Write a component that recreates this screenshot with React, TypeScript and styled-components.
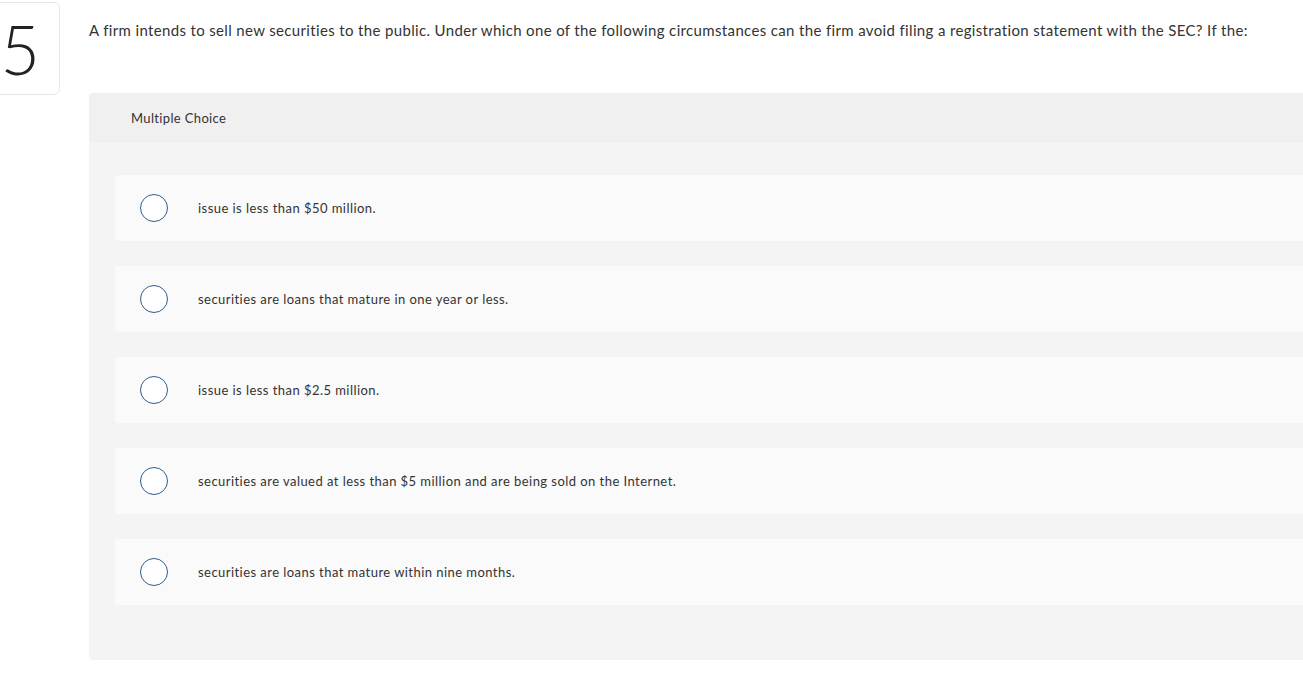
import React from 'react';
import styled, { createGlobalStyle } from 'styled-components';

const GlobalStyle = createGlobalStyle`
  body {
    margin: 0;
    background: #ffffff;
    font-family: Lato, "Open Sans", Arial, sans-serif;
    color: #333333;
    overflow-x: hidden;
  }
`;

const choices = [
  'issue is less than $50 million.',
  'securities are loans that mature in one year or less.',
  'issue is less than $2.5 million.',
  'securities are valued at less than $5 million and are being sold on the Internet.',
  'securities are loans that mature within nine months.',
];

function App() {
  return (
    <>
      <GlobalStyle />
      <Page>
        <NumberBox>5</NumberBox>
        <Main>
          <Question>
            A firm intends to sell new securities to the public. Under which one of the following
            circumstances can the firm avoid filing a registration statement with the SEC? If the:
          </Question>
          <Panel>
            <PanelHeader>Multiple Choice</PanelHeader>
            <PanelBody>
              {choices.map((c) => (
                <Choice key={c}>
                  <Radio />
                  <ChoiceText>{c}</ChoiceText>
                </Choice>
              ))}
            </PanelBody>
          </Panel>
        </Main>
      </Page>
    </>
  );
}

const Page = styled.div`
  display: flex;
  align-items: flex-start;
  width: 1400px;
`;

const NumberBox = styled.div`
  flex: none;
  width: 79px;
  height: 93px;
  margin: 2px 29px 0 -19px;
  border: 1px solid #e6e6e6;
  border-radius: 6px;
  box-sizing: border-box;
  display: flex;
  align-items: center;
  justify-content: flex-end;
  padding-right: 19px;
  font-size: 68px;
  font-weight: 300;
  color: #222222;
  line-height: 1;
`;

const Main = styled.div`
  flex: 1;
`;

const Question = styled.p`
  margin: 0;
  padding-top: 20px;
  height: 93px;
  box-sizing: border-box;
  font-size: 15px;
  line-height: 20px;
  letter-spacing: 0.35px;
  color: #333333;
`;

const Panel = styled.div`
  width: 1260px;
  background: #f4f4f4;
  border-radius: 4px;
`;

const PanelHeader = styled.div`
  height: 50px;
  display: flex;
  align-items: center;
  padding-left: 42px;
  background: #f0f0f0;
  border-radius: 4px 4px 0 0;
  font-size: 13px;
  letter-spacing: 0.35px;
  color: #333333;
`;

const PanelBody = styled.div`
  padding: 32px 0 55px 26px;
  display: flex;
  flex-direction: column;
  gap: 25px;
`;

const Choice = styled.div`
  height: 66px;
  display: flex;
  align-items: center;
  padding-left: 25px;
  background: #fafafa;
  border-radius: 3px;
`;

const Radio = styled.span`
  flex: none;
  width: 28px;
  height: 28px;
  box-sizing: border-box;
  border: 1.5px solid #2d5e90;
  border-radius: 50%;
  background: #ffffff;
`;

const ChoiceText = styled.span`
  margin-left: 30px;
  font-size: 13px;
  letter-spacing: 0.45px;
  color: #333333;
`;

export default App;
